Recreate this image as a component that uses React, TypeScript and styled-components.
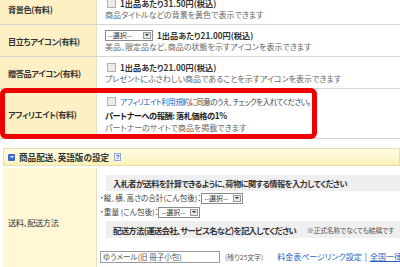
import React from "react";
import styled, { createGlobalStyle } from "styled-components";

const GlobalStyle = createGlobalStyle`
  html, body { margin: 0; padding: 0; background: #fff; }
  body {
    font-family: "Noto Sans CJK JP", "Noto Sans", sans-serif;
    font-feature-settings: "palt";
    font-size: 8px;
    color: #333;
    overflow: hidden;
  }
`;

const Page = styled.div`
  width: 400px;
  height: 267px;
  overflow: hidden;
`;

const Scroll = styled.div`
  margin-top: -7px;
`;

const Table = styled.div<{ $inset?: boolean }>`
  display: flex;
  flex-direction: column;
  margin-left: ${(p) => (p.$inset ? "3px" : "0")};
`;

const Row = styled.div`
  position: relative;
  display: flex;
  border-bottom: 1px solid #d6d6d6;
`;

const Label = styled.div<{ $light?: boolean; $plain?: boolean }>`
  width: ${(p) => (p.$light ? "94px" : "97px")};
  flex: none;
  box-sizing: border-box;
  background: ${(p) => (p.$light ? "#fff7d6" : "#fdf0c4")};
  border-right: 1px solid #e6dfc4;
  padding-left: ${(p) => (p.$light ? "5px" : "8px")};
  display: flex;
  align-items: center;
  font-weight: ${(p) => (p.$plain ? 400 : 700)};
  font-size: 8.2px;
  letter-spacing: -0.4px;
  color: #333;
  white-space: nowrap;
`;

const Content = styled.div<{ $pad?: string }>`
  flex: 1;
  padding: ${(p) => p.$pad || "4px 4px 3px 8px"};
  line-height: 12px;
  min-width: 0;
  white-space: nowrap;
`;

const Line = styled.div<{ $h?: number }>`
  display: flex;
  align-items: center;
  height: ${(p) => p.$h || 12}px;
`;

const Price = styled.span`
  font-weight: 700;
  font-size: 8.2px;
  color: #333;
`;

const Desc = styled.span<{ $dark?: boolean; $tight?: boolean }>`
  color: ${(p) => (p.$dark ? "#444" : "#666")};
  font-size: ${(p) => (p.$tight ? "7.6px" : "8px")};
  letter-spacing: ${(p) => (p.$tight ? "-0.55px" : "0")};
`;

const Strong = styled.span`
  font-weight: 700;
  font-size: 8.2px;
  letter-spacing: -0.4px;
  color: #222;
`;

const Check = styled.span`
  display: inline-block;
  width: 7px;
  height: 7px;
  border: 1px solid #b0b0b0;
  background: #ececec;
  margin-left: 2px;
  margin-right: 4px;
  flex: none;
`;

const Link = styled.span<{ $under?: boolean; $tight?: boolean }>`
  color: #2b5fc0;
  font-size: ${(p) => (p.$tight ? "7.6px" : "8px")};
  letter-spacing: ${(p) => (p.$tight ? "-0.55px" : "0")};
  text-decoration: ${(p) => (p.$under ? "underline" : "none")};
`;

const SelectBox = styled.span<{ $w?: number }>`
  display: inline-flex;
  align-items: center;
  justify-content: space-between;
  box-sizing: border-box;
  width: ${(p) => p.$w || 48}px;
  height: 11px;
  border: 1px solid #8a8a8a;
  background: #fff;
  font-size: 7px;
  color: #333;
  padding-left: 2px;
  padding-right: 1px;
  margin-right: 4px;
  flex: none;
`;

const SelectArrow = styled.span`
  display: inline-flex;
  align-items: center;
  justify-content: center;
  width: 8px;
  height: 7px;
  box-sizing: border-box;
  border: 1px solid #999;
  background: #e6e6e6;
  &::after {
    content: "";
    border-left: 2px solid transparent;
    border-right: 2px solid transparent;
    border-top: 2.5px solid #222;
  }
`;

const RedFrame = styled.div`
  position: absolute;
  left: 0;
  top: -1px;
  bottom: -1px;
  width: 317px;
  box-sizing: border-box;
  border: 5px solid #ee0000;
  border-radius: 6px;
  pointer-events: none;
`;

const Gap = styled.div`
  height: 9px;
`;

const SectionHeader = styled.div`
  margin-left: 3px;
  height: 18px;
  box-sizing: border-box;
  border: 1px solid #e8dfae;
  background: linear-gradient(#fffce6, #fcf2b8);
  display: flex;
  align-items: center;
  padding-left: 4px;
  gap: 4px;
  font-weight: 700;
  font-size: 8.6px;
  color: #333;
`;

const HeaderGap = styled.div`
  height: 2px;
`;

const Toggle = styled.span`
  width: 7px;
  height: 7px;
  border-radius: 1px;
  background: #3b68c9;
  display: inline-flex;
  align-items: center;
  justify-content: center;
  &::after {
    content: "";
    border-left: 2px solid transparent;
    border-right: 2px solid transparent;
    border-top: 2.5px solid #fff;
  }
`;

const Help = styled.span`
  width: 7px;
  height: 8px;
  box-sizing: border-box;
  border: 1px solid #8fa6db;
  background: #eef2ff;
  color: #2b5fc0;
  font-size: 6px;
  line-height: 6px;
  text-align: center;
  margin-left: 1px;
  font-family: "Liberation Sans", sans-serif;
`;

const GrayBar = styled.div<{ $big?: boolean }>`
  margin-left: 6px;
  background: #efefef;
  height: ${(p) => (p.$big ? 17 : 16)}px;
  display: flex;
  align-items: center;
  padding-left: 7px;
  font-weight: 700;
  font-size: ${(p) => (p.$big ? 8.4 : 8.2)}px;
  letter-spacing: ${(p) => (p.$big ? "-0.7px" : "-0.55px")};
  color: #333;
  gap: 11px;
`;

const Note = styled.span`
  font-weight: 400;
  font-size: 6.8px;
  letter-spacing: -0.2px;
  color: #555;
`;

const Bullet = styled.div`
  display: flex;
  align-items: center;
  height: 14px;
  font-size: 7.6px;
  color: #444;
`;

const TextInput = styled.span`
  display: inline-flex;
  align-items: center;
  box-sizing: border-box;
  width: 120px;
  height: 12px;
  border: 1px solid #9a9a9a;
  padding-left: 2px;
  font-size: 7.5px;
  color: #555;
  flex: none;
`;

const Small = styled.span`
  font-size: 6.8px;
  color: #555;
  margin-left: 5px;
  margin-right: 14px;
`;

const Sep = styled.span`
  color: #555;
  font-size: 8px;
  margin: 0 3px;
`;

export default function App() {
  return (
    <>
      <GlobalStyle />
      <Page>
        <Scroll>
          <Table>
            <Row>
              <Label>背景色(有料)</Label>
              <Content>
                <Line>
                  <Check />
                  <Price>1出品あたり31.50円(税込)</Price>
                </Line>
                <Line>
                  <Desc>商品タイトルなどの背景を黄色で表示できます</Desc>
                </Line>
              </Content>
            </Row>
            <Row>
              <Label>目立ちアイコン(有料)</Label>
              <Content>
                <Line>
                  <SelectBox>
                    --選択--
                    <SelectArrow />
                  </SelectBox>
                  <Price>1出品あたり21.00円(税込)</Price>
                </Line>
                <Line>
                  <Desc>美品、限定品など、商品の状態を示すアイコンを表示できます</Desc>
                </Line>
              </Content>
            </Row>
            <Row>
              <Label>贈答品アイコン(有料)</Label>
              <Content>
                <Line>
                  <Check />
                  <Price>1出品あたり21.00円(税込)</Price>
                </Line>
                <Line>
                  <Desc>プレゼントにふさわしい商品であることを示すアイコンを表示できます</Desc>
                </Line>
              </Content>
            </Row>
            <Row>
              <Label>アフィリエイト(有料)</Label>
              <Content $pad="6px 4px 4px 8px">
                <Line $h={13}>
                  <Check />
                  <Link $tight>アフィリエイト利用規約</Link>
                  <Desc $dark $tight>に同意のうえ、チェックを入れてください。</Desc>
                </Line>
                <Line $h={13}>
                  <Strong>パートナーへの報酬: 落札価格の1%</Strong>
                </Line>
                <Line $h={13}>
                  <Desc>パートナーのサイトで商品を掲載できます</Desc>
                </Line>
              </Content>
              <RedFrame />
            </Row>
          </Table>
        </Scroll>
        <Gap />
        <SectionHeader>
          <Toggle />
          商品配送、英語版の設定
          <Help>?</Help>
        </SectionHeader>
        <HeaderGap />
        <Table $inset>
          <Row>
            <Label $light $plain>送料、配送方法</Label>
            <Content $pad="7px 0 13px 3px">
              <GrayBar>入札者が送料を計算できるように、荷物に関する情報を入力してください</GrayBar>
              <Bullet>
                ・縦、横、高さの合計(こん包後)：
                <SelectBox $w={42}>
                  --選択--
                  <SelectArrow />
                </SelectBox>
              </Bullet>
              <Bullet>
                ・重量 (こん包後)：
                <SelectBox $w={42}>
                  --選択--
                  <SelectArrow />
                </SelectBox>
              </Bullet>
              <GrayBar $big style={{ marginTop: 2 }}>
                配送方法(運送会社、サービス名など)を記入してください
                <Note>※正式名称でなくても結構です</Note>
              </GrayBar>
              <Line style={{ marginTop: 13 }}>
                <TextInput>ゆうメール(旧 冊子小包)</TextInput>
                <Small>(残り25文字)</Small>
                <Link>料金表ページリンク設定</Link>
                <Sep>|</Sep>
                <Link $under>全国一律送料</Link>
              </Line>
            </Content>
          </Row>
        </Table>
      </Page>
    </>
  );
}
